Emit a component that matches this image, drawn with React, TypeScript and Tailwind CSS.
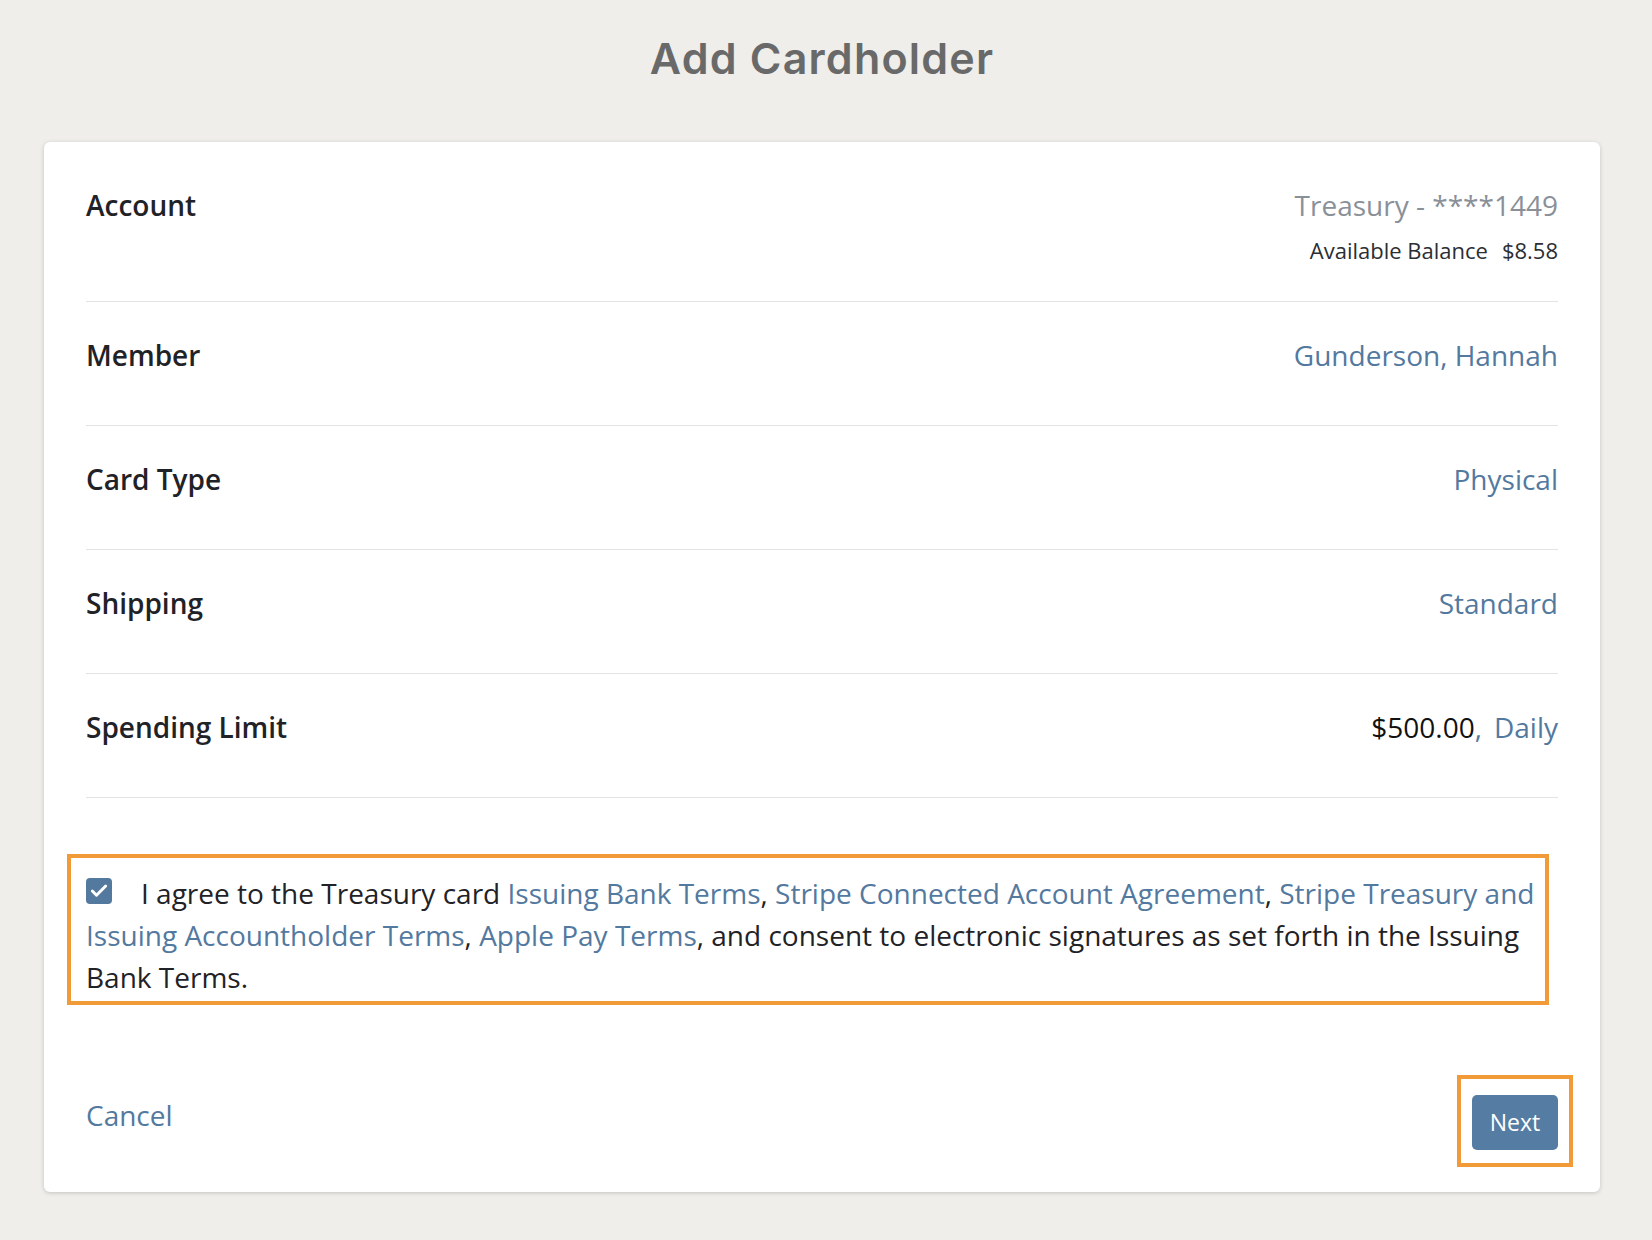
import { Check } from "lucide-react";

const rows = [
  { label: "Member", value: "Gunderson, Hannah" },
  { label: "Card Type", value: "Physical" },
  { label: "Shipping", value: "Standard" },
];

export default function App() {
  return (
    <div className="min-h-[1240px] bg-[#efeeeb] pl-[44px] pr-[52px] pt-[26px] pb-[48px] font-['Open_Sans',sans-serif] text-[#1f2226]">
      <h1 className="text-center font-['Inter',sans-serif] text-[43px] leading-[64px] font-semibold tracking-[1.2px] text-[#696969]">
        Add Cardholder
      </h1>

      <div className="mt-[52px] rounded-[6px] bg-white px-[42px] pb-[42px] shadow-[0_1px_4px_rgba(0,0,0,0.18)]">
        <div className="flex justify-between border-b border-[#e3e3e3] pt-[45px] pb-[37px]">
          <div className="text-[28px] leading-[36px] font-semibold">Account</div>
          <div className="text-right">
            <div className="text-[28px] leading-[36px] text-[#8a9098]">Treasury - ****1449</div>
            <div className="mt-[13px] flex justify-end gap-[14px] text-[22px] leading-[28px] text-[#2b2e33]">
              <span>Available Balance</span>
              <span>$8.58</span>
            </div>
          </div>
        </div>

        {rows.map((r) => (
          <div key={r.label} className="flex justify-between border-b border-[#e3e3e3] pt-[35px] pb-[52px]">
            <div className="text-[28px] leading-[36px] font-semibold">{r.label}</div>
            <a className="text-[28px] leading-[36px] text-[#53799f]">{r.value}</a>
          </div>
        ))}

        <div className="flex justify-between border-b border-[#e3e3e3] pt-[35px] pb-[52px]">
          <div className="text-[28px] leading-[36px] font-semibold">Spending Limit</div>
          <div className="text-[28px] leading-[36px]">
            <span className="text-[#111]">$500.00</span>
            <span className="text-[#53799f]">,</span>
            <a className="ml-[12px] text-[#53799f]">Daily</a>
          </div>
        </div>

        <div className="relative mt-[74px]">
          <p className="text-[28px] leading-[42px] text-[#1f2226]">
            <span className="mr-[29px] inline-flex h-[26px] w-[26px] translate-y-[-3px] items-center justify-center rounded-[4px] bg-[#53799f] align-baseline">
              <Check className="h-[20px] w-[20px] text-white" strokeWidth={3.5} />
            </span>
            I agree to the Treasury card <a className="text-[#53799f]">Issuing Bank Terms</a>,{" "}
            <a className="text-[#53799f]">Stripe Connected Account Agreement</a>,{" "}
            <a className="text-[#53799f]">Stripe Treasury and Issuing Accountholder Terms</a>,{" "}
            <a className="text-[#53799f]">Apple Pay Terms</a>, and consent to electronic signatures as set forth in the
            Issuing Bank Terms.
          </p>
          <div className="pointer-events-none absolute -top-[18px] -bottom-[7px] -left-[19px] right-[9px] border-[4px] border-[#f09a38]" />
        </div>

        <div className="mt-[97px] flex items-start justify-between">
          <a className="mt-[2px] text-[28px] leading-[36px] text-[#53799f]">Cancel</a>
          <div className="relative">
            <button className="flex h-[55px] w-[86px] items-center justify-center rounded-[5px] bg-[#557ca2] text-[23px] text-white">
              Next
            </button>
            <div className="pointer-events-none absolute -top-[20px] -bottom-[17px] -left-[15px] -right-[15px] border-[4px] border-[#f09a38]" />
          </div>
        </div>
      </div>
    </div>
  );
}
